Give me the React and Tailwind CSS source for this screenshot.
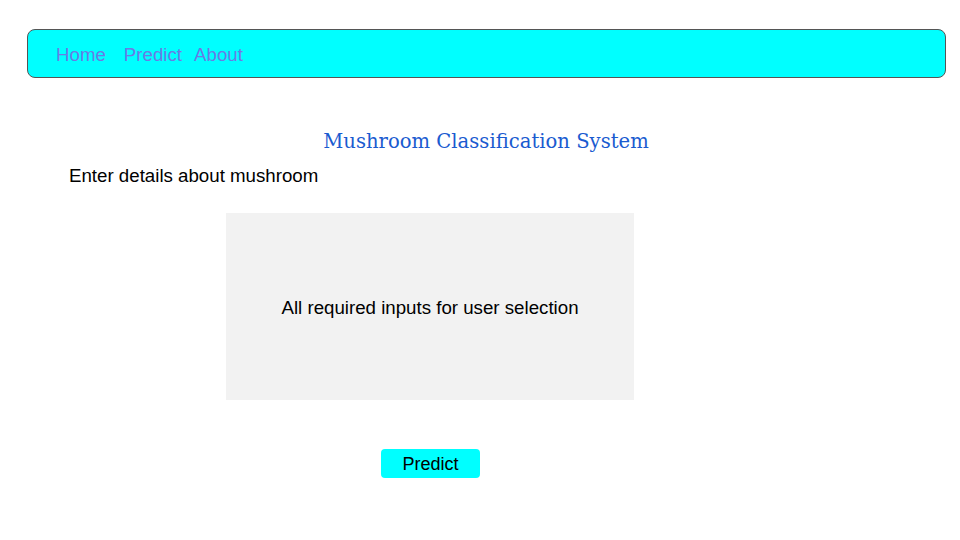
export default function App() {
  return (
    <div className="w-[960px] h-[540px] bg-white relative" style={{ fontFamily: '"Liberation Sans", Arial, sans-serif' }}>
      <div className="pt-[29px] pl-[27px] pr-[14px]">
        <nav className="h-[49px] bg-[#00ffff] border border-[#555] rounded-[8px] flex items-center pl-[28px] pt-[3px] text-[18.7px] text-[#6a7be6]">
          <a className="mr-[18px]">Home</a>
          <a className="mr-[12px]">Predict</a>
          <a>About</a>
        </nav>
      </div>
      <h1 className="mt-[51px] text-center text-[#1a5bd0] text-[19.6px] leading-[26px] pl-[12px]" style={{ fontFamily: '"DejaVu Serif", "Liberation Serif", serif' }}>
        Mushroom Classification System
      </h1>
      <p className="mt-[10px] ml-[69px] text-[18.7px] leading-[22px] text-black">Enter details about mushroom</p>
      <div className="mt-[26px] ml-[226px] w-[408px] h-[187px] bg-[#f2f2f2] flex items-center justify-center pt-[3px] text-[18.7px] text-black">
        All required inputs for user selection
      </div>
      <div className="mt-[49px] ml-[381px]">
        <button className="w-[99px] h-[29px] bg-[#00ffff] rounded-[4px] pt-[2px] text-[18px] text-black">Predict</button>
      </div>
    </div>
  );
}
